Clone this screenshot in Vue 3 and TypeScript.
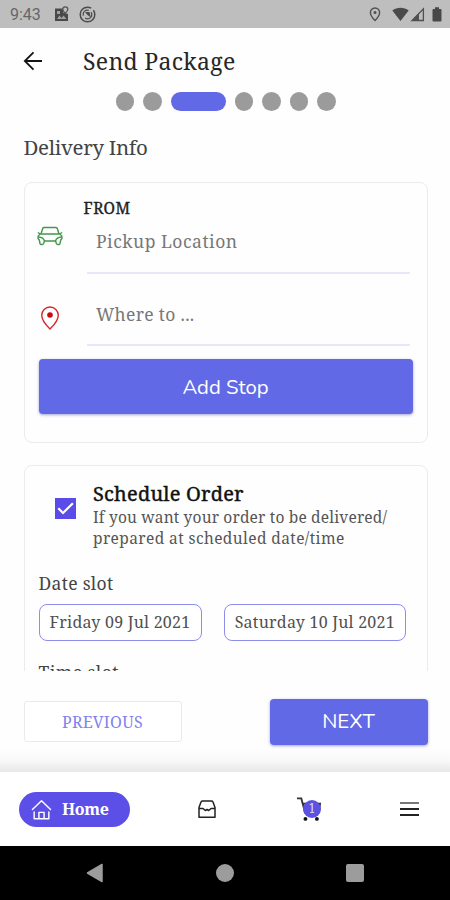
<script setup lang="ts">
import { ref } from 'vue'

const steps = 7
const currentStep = ref(3)
const scheduled = ref(true)
const cartCount = ref(1)
const dates: string[] = ['Friday 09 Jul 2021', 'Saturday 10 Jul 2021']
</script>

<template>
  <div class="screen">
    <header class="status">
      <span class="clock">9:43</span>
      <svg class="s-map" viewBox="0 0 15 16">
        <path d="M1 2.500h8v4l5 1.500v7H1z" fill="#484848" />
        <path d="M3 5h3v3H3zM3 13l2.500-3.500 2 2.500 2-2.500 3 3.500z" fill="#a0a0a0" />
        <path d="M11.300 .8a2.500 2.500 0 0 1 2.500 2.500c0 1.800-2.500 4-2.500 4s-2.500-2.200-2.500-4A2.500 2.500 0 0 1 11.300 .8z" fill="#bebebe" stroke="#555" stroke-width="1.300" />
      </svg>
      <svg class="s-target" viewBox="0 0 17 17">
        <circle cx="8.500" cy="8.500" r="7.300" fill="none" stroke="#4c4c4c" stroke-width="1.500" stroke-dasharray="38 3 5 0" />
        <circle cx="8.500" cy="8.500" r="4.300" fill="none" stroke="#4c4c4c" stroke-width="1.300" stroke-dasharray="9 3" />
        <path d="M6 6h4.500l1.300 5.500L8.500 9z" fill="#4c4c4c" />
      </svg>
      <span class="grow"></span>
      <svg class="s-pin" viewBox="0 0 12 15">
        <path d="M6 1a4.600 4.600 0 0 1 4.600 4.600C10.600 9 6 13.600 6 13.600S1.400 9 1.400 5.600A4.600 4.600 0 0 1 6 1z" fill="none" stroke="#505050" stroke-width="1.400" />
        <circle cx="6" cy="5.600" r="1.500" fill="#505050" />
      </svg>
      <svg class="s-wifi" viewBox="0 0 17 15"><path d="M.3 3.500C5-.2 12-.2 16.700 3.500L8.500 14z" fill="#4a4a4a" /></svg>
      <svg class="s-signal" viewBox="0 0 15 15">
        <path d="M13.400 1.800v11.700H2z" fill="none" stroke="#505050" stroke-width="1.300" />
        <path d="M9 6v7.500H2z" fill="#505050" />
      </svg>
      <svg class="s-battery" viewBox="0 0 10 15"><path d="M3 .3h4V2h1.500q1 0 1 1v10.500q0 1-1 1h-7q-1 0-1-1V3q0-1 1-1H3z" fill="#484848" /></svg>
    </header>

    <div class="appbar">
      <svg class="back" viewBox="0 0 20 20"><path d="M19 10H2M10.500 1.300L1.800 10l8.700 8.700" fill="none" stroke="#151515" stroke-width="1.800" /></svg>
      <h1>Send Package</h1>
    </div>

    <div class="steps">
      <i v-for="n in steps" :key="n" :class="{ active: n === currentStep }"></i>
    </div>

    <main class="content">
      <h2>Delivery Info</h2>

      <section class="card route">
        <div class="from">FROM</div>
        <div class="field pickup">
          <svg class="car" viewBox="0 0 26 20" fill="none" stroke="#43964d" stroke-width="1.400" stroke-linejoin="round">
            <path d="M4 8L5.700 2.500Q6 1.500 7 1.500h12q1 0 1.300 1L22 8" />
            <path d="M3 8h20q2 1.300 2 4.500l-1.300 1.500-.7 3.500q-.3 1-1.300 1h-.9q-1 0-1.400-1L18.500 15h-11l-.9 2.500q-.4 1-1.400 1h-.9q-1 0-1.300-1L2.300 14 1 12.500Q1 9.300 3 8z" />
            <path d="M.8 6.500L3.500 8M25.200 6.500L22.500 8M1.500 11q5 .3 6 4M24.500 11q-5 .3-6 4" />
          </svg>
          <span class="input">Pickup Location</span>
        </div>
        <div class="field dest">
          <svg class="pin" viewBox="0 0 20 24">
            <path d="M10 1a8.300 8.300 0 0 1 8.300 8.300C18.300 15 10 23 10 23S1.700 15 1.700 9.300A8.300 8.300 0 0 1 10 1z" fill="none" stroke="#d3262c" stroke-width="1.400" />
            <circle cx="10" cy="9" r="2.800" fill="#cc0710" />
          </svg>
          <span class="input">Where to ...</span>
        </div>
        <button class="primary add">Add Stop</button>
      </section>

      <section class="card schedule">
        <div class="option" @click="scheduled = !scheduled">
          <span class="check">
            <svg v-if="scheduled" viewBox="0 0 21 21"><path d="M3.300 10.300l4.700 4.700L17.900 5.200" fill="none" stroke="#fff" stroke-width="2.200" /></svg>
          </span>
          <div>
            <h3>Schedule Order</h3>
            <p class="l1">If you want your order to be delivered/</p>
            <p class="l2">prepared at scheduled date/time</p>
          </div>
        </div>
        <div class="label date">Date slot</div>
        <div class="slots">
          <button v-for="(d, i) in dates" :key="d" :class="['slot', 'slot-' + i]">{{ d }}</button>
        </div>
        <div class="label time">Time slot</div>
      </section>
    </main>

    <div class="actions">
      <button class="previous">PREVIOUS</button>
      <button class="primary next">NEXT</button>
    </div>

    <nav class="tabs">
      <div class="home">
        <svg viewBox="0 0 22 22" fill="none" stroke="#fff" stroke-width="1.500" stroke-linejoin="round" stroke-linecap="round">
          <path d="M1.500 11L11 1.800l9.500 9.200M3.300 13.500v7.200h15.400v-7.200M8.300 20.500V14h5.400v6.500" />
        </svg>
        <span>Home</span>
      </div>
      <svg class="inbox" viewBox="0 0 18 18" fill="none" stroke="#222" stroke-width="1.500" stroke-linejoin="round">
        <path d="M4.500 1h9Q14.500 1 15 2l2 5.500v9.700H1V7.500L3 2Q3.500 1 4.500 1zM1.300 8.500H5l2.300 2L9 9.500l1.700 1 2.300-2h3.700" />
      </svg>
      <div class="cart">
        <svg viewBox="0 0 27 27">
          <path d="M1 2.500h4.500L9.500 17.500h14L25 8H7" fill="none" stroke="#333" stroke-width="1.900" />
          <circle cx="9.800" cy="23.800" r="2" fill="#111" /><circle cx="21.700" cy="23.800" r="2" fill="#111" />
        </svg>
        <b>{{ cartCount }}</b>
      </div>
      <div class="menu"><i></i><i></i><i></i></div>
    </nav>

    <footer class="system">
      <svg viewBox="0 0 18 20"><path d="M16 1.500v17L1.500 10z" fill="#9c9c9c" stroke="#9c9c9c" stroke-width="1.500" stroke-linejoin="round" /></svg>
      <i class="round"></i>
      <i class="square"></i>
    </footer>
  </div>
</template>

<style>
body { margin: 0; background: #fff; }
</style>

<style scoped>
* { box-sizing: border-box; }
.screen { width: 450px; height: 900px; display: flex; flex-direction: column; overflow: hidden; background: #fefefe; color: #444; font-family: "Noto Serif", "DejaVu Serif", serif; font-stretch: condensed; white-space: nowrap; }
svg { display: block; flex: none; overflow: visible; }
h1, h2, h3, p { margin: 0; font-weight: 400; }
button { font: inherit; padding: 0; border: 0; }
.grow { flex: 1; }

.status { height: 28px; flex: none; display: flex; align-items: center; background: #bebebe; padding: 0 8px 0 10px; }
.clock { width: 44px; font: 16px/28px Roboto, sans-serif; color: #666; padding-top: 1px; }
.s-map { width: 15px; height: 16px; }
.s-target { width: 17px; height: 17px; margin-left: 9.500px; }
.s-pin { width: 12px; height: 15px; margin-right: 11px; }
.s-wifi { width: 17px; height: 15px; margin-right: 1px; }
.s-signal { width: 15px; height: 15px; margin-right: 7px; }
.s-battery { width: 10px; height: 15px; }

.appbar { height: 64px; flex: none; display: flex; align-items: center; padding: 2px 0 0 23px; }
.back { width: 20px; height: 20px; margin-right: 40px; }
h1 { font-size: 23px; line-height: 30px; letter-spacing: .3px; color: #262626; }
.steps { height: 19px; flex: none; display: flex; gap: 9px; justify-content: center; padding-left: 1px; }
.steps i { width: 18.500px; height: 18.500px; border-radius: 10px; background: #9b9b9b; }
.steps .active { width: 55px; background: #6269e6; }

.content { height: 560px; flex: none; overflow: hidden; padding: 21px 22.500px 0 23.500px; }
h2 { font-size: 20.500px; line-height: 30px; letter-spacing: -.33px; color: #444; }
.card { border: 1.500px solid #ebebeb; border-radius: 8px; background: #fefefe; }
.route { height: 261px; margin-top: 20px; padding: 15px 14px 0; }
.from { margin-left: 45px; font-size: 15.500px; line-height: 20px; letter-spacing: .5px; color: #222; -webkit-text-stroke: .35px #222; }
.field { display: flex; padding-right: 3px; }
.input { flex: 1; border-bottom: 2px solid #e8e7fa; padding-left: 9px; font-size: 17.500px; color: #777; letter-spacing: .5px; }
.pickup { height: 56px; }
.pickup .input { line-height: 47px; }
.dest { height: 72px; }
.dest .input { line-height: 80px; letter-spacing: .3px; }
.car { width: 26px; height: 20px; margin: 8px 24px 0 -1.500px; }
.pin { width: 20px; height: 24px; margin: 32px 27px 0 1.500px; }
.primary { background: #6269e6; color: #fff; border-radius: 4px; font-family: Nunito, "Open Sans", sans-serif; font-stretch: normal; box-shadow: 0 1px 3px #5558a588; }
.add { display: block; width: 100%; height: 55px; margin-top: 13px; font-size: 20.300px; }

.schedule { height: 260px; margin-top: 22px; padding: 15px 14px 0; }
.option { display: flex; }
.check { width: 21px; height: 21px; margin: 17px 17px 0 16.500px; background: #5b4be8; flex: none; }
.check svg { width: 21px; height: 21px; }
h3 { font-size: 20px; line-height: 26px; letter-spacing: .2px; color: #111; -webkit-text-stroke: .4px #111; }
p { font-size: 15.500px; line-height: 21px; color: #555; }
.l1 { letter-spacing: .17px; }
.l2 { letter-spacing: .4px; }
.label { font-size: 17.500px; line-height: 26px; letter-spacing: .3px; color: #444; }
.date { margin-top: 21px; }
.slots { display: flex; gap: 22.500px; margin-top: 8px; }
.slot { height: 37px; width: 163px; border: 1.500px solid #8d8deb; border-radius: 8px; background: #fff; color: #505050; font-size: 16px; letter-spacing: .23px; padding-bottom: 2px; }
.slot-1 { width: 181.500px; }
.time { margin-top: 18px; letter-spacing: .45px; }

.actions { height: 101px; flex: none; display: flex; justify-content: space-between; align-items: flex-start; padding: 28px 22.500px 0 23.500px; background: linear-gradient(#fefefe 76%, #f9f9f9 88%, #e8e8e8); }
.previous { width: 158px; height: 41px; margin-top: 2px; border: 1.500px solid #eaeaea; border-radius: 3px; background: #fff; color: #8283ed; font-size: 16px; letter-spacing: .3px; }
.next { width: 158px; height: 46px; font-size: 20.500px; padding-bottom: 2px; }

.tabs { height: 74px; flex: none; display: flex; align-items: center; padding: 0 31px 0 19px; background: #fff; }
.home { width: 111px; height: 35px; border-radius: 18px; background: #5c4fe8; color: #fff; display: flex; align-items: center; padding-left: 12px; gap: 10px; font-size: 16px; letter-spacing: -.3px; font-weight: 700; }
.home svg { width: 21px; height: 21px; margin-top: 1px; }
.inbox { width: 18px; height: 18px; margin-left: 68px; }
.cart { width: 26px; height: 26px; margin-left: 80px; position: relative; }
.cart svg { width: 26px; height: 26px; }
.cart b { position: absolute; left: 7px; top: 4px; width: 18px; height: 18px; border-radius: 50%; background: #5b51e3; color: #ddd; text-align: center; font: 12px/18px "DejaVu Serif", serif; }
.menu { width: 19px; margin-left: auto; display: grid; gap: 4px; }
.menu i { height: 2px; background: #222; }
.menu i:first-child { background: #777; }

.system { height: 54px; flex: none; background: #000; display: flex; align-items: center; padding: 0 86px; justify-content: space-between; }
.system svg { width: 18px; height: 20px; }
.round { width: 18px; height: 18px; border-radius: 50%; background: #9c9c9c; }
.square { width: 18px; height: 18px; border-radius: 2px; background: #9c9c9c; }
</style>
